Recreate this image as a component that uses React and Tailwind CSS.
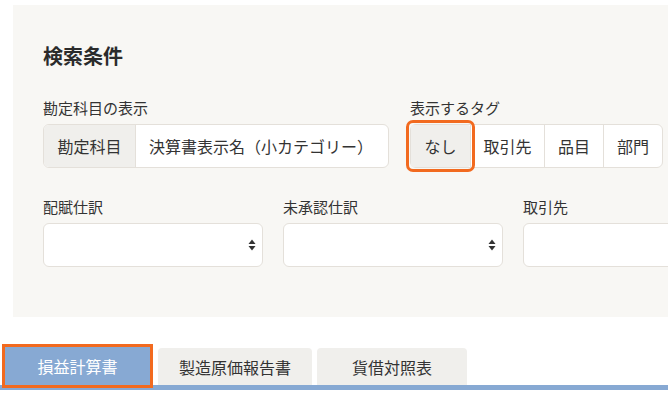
import { useState } from "react";

const font = { fontFamily: '"Noto Sans CJK JP", "Noto Sans", sans-serif' };

function SelectArrows() {
    return (
        <svg width="8" height="13" viewBox="0 0 8 13" className="absolute right-[6px] top-1/2 -translate-y-1/2">
            <path d="M4 1 L7.5 5.5 L0.5 5.5 Z" fill="#333" />
            <path d="M4 12 L7.5 7.5 L0.5 7.5 Z" fill="#333" />
        </svg>
    );
}

function SelectField({ label, arrows = true }) {
    return (
        <div className="w-[220px] shrink-0">
            <div className="text-[15px] leading-[20px] text-[#333]">{label}</div>
            <div className="relative mt-[6px] h-[44px] rounded-[6px] border border-[#e4e0da] bg-white">
                {arrows && <SelectArrows />}
            </div>
        </div>
    );
}

export default function App() {
    const [tag, setTag] = useState("なし");
    const [tab, setTab] = useState("損益計算書");
    const tags = [
        { name: "なし", w: "w-[59px]" },
        { name: "取引先", w: "w-[74px]" },
        { name: "品目", w: "w-[59px]" },
        { name: "部門", w: "w-[59px]" },
    ];

    return (
        <div className="w-[668px] h-[395px] overflow-hidden bg-white text-[#333]" style={font}>
            <div className="pt-[5px] pl-[13px]">
                <div className="w-[720px] bg-[#f8f7f4] pl-[30px] pt-[37px] pb-[50px]">
                    <h2 className="text-[20px] leading-[28px] font-bold text-[#2b2b2b]">検索条件</h2>

                    <div className="flex gap-[21px] mt-[28px]">
                        <div>
                            <div className="text-[15px] leading-[20px]">勘定科目の表示</div>
                            <div className="mt-[6px] flex h-[44px] w-[346px] rounded-[6px] border border-[#e4e0da] bg-white overflow-hidden">
                                <div className="w-[92px] shrink-0 flex items-center justify-center bg-[#f0efec] border-r border-[#e4e0da] text-[16px]">
                                    勘定科目
                                </div>
                                <div className="flex items-center pl-[13px] text-[16px]">決算書表示名（小カテゴリー）</div>
                            </div>
                        </div>

                        <div>
                            <div className="text-[15px] leading-[20px]">表示するタグ</div>
                            <div className="mt-[6px] flex h-[44px] rounded-[6px] border border-[#e4e0da] bg-white">
                                {tags.map((t, i) => (
                                    <button
                                        key={t.name}
                                        onClick={() => setTag(t.name)}
                                        className={
                                            t.w +
                                            " flex items-center justify-center text-[16px] " +
                                            (i > 0 ? "border-l border-[#e4e0da] " : "") +
                                            (tag === t.name
                                                ? "bg-[#f0efec] rounded-[2px] outline-[3px] outline-offset-[2px] outline-[#f26a1f]"
                                                : "")
                                        }
                                    >
                                        {t.name}
                                    </button>
                                ))}
                            </div>
                        </div>
                    </div>

                    <div className="flex gap-[20px] mt-[29px]">
                        <SelectField label="配賦仕訳" />
                        <SelectField label="未承認仕訳" />
                        <SelectField label="取引先" arrows={false} />
                    </div>
                </div>
            </div>

            <div className="mt-[30px]">
                <div className="flex items-end pl-[5px] h-[38px]">
                    <button
                        onClick={() => setTab("損益計算書")}
                        className={
                            "w-[145px] h-[38px] text-[16px] " +
                            (tab === "損益計算書"
                                ? "relative z-10 bg-[#87a9d3] text-white outline-[3px] outline-[#f26a1f]"
                                : "bg-[#f0efec] rounded-t-[4px] h-[37px]")
                        }
                    >
                        損益計算書
                    </button>
                    <button
                        onClick={() => setTab("製造原価報告書")}
                        className={
                            "ml-[8px] w-[154px] h-[37px] text-[16px] rounded-t-[4px] " +
                            (tab === "製造原価報告書" ? "bg-[#87a9d3] text-white" : "bg-[#f0efec]")
                        }
                    >
                        製造原価報告書
                    </button>
                    <button
                        onClick={() => setTab("貸借対照表")}
                        className={
                            "ml-[5px] w-[150px] h-[37px] text-[16px] rounded-t-[4px] " +
                            (tab === "貸借対照表" ? "bg-[#87a9d3] text-white" : "bg-[#f0efec]")
                        }
                    >
                        貨借対照表
                    </button>
                </div>
                <div className="h-[5px] bg-[#87a9d3]" />
            </div>
        </div>
    );
}
